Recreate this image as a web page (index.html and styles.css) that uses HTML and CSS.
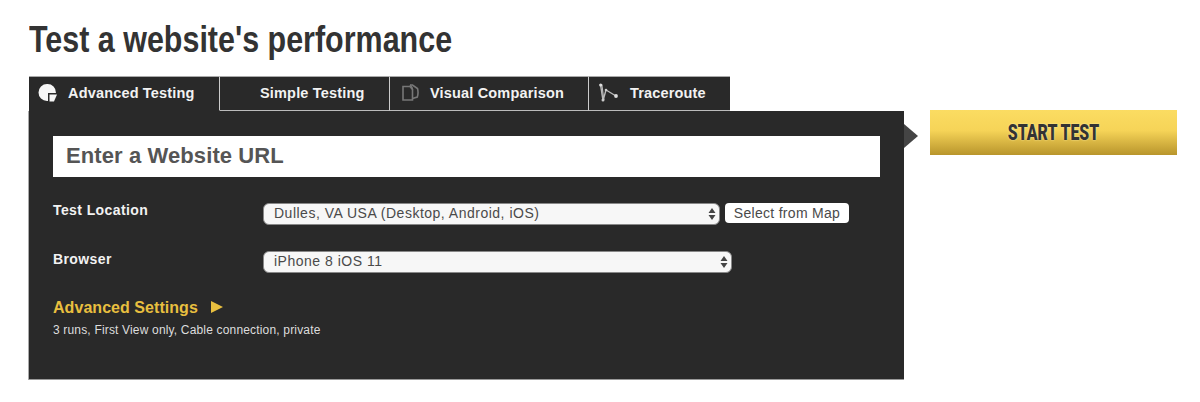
FILE: index.html
```html
<!DOCTYPE html>
<html lang="en">
<head>
    <meta charset="UTF-8">
    <meta name="viewport" content="width=device-width, initial-scale=1.0">
    <title>Test a website's performance</title>
    <link rel="stylesheet" href="styles.css">
</head>
<body>
    <h1 class="title">Test a website's performance</h1>
    <div class="tabs">
        <a class="tab tab-advanced active">
            <svg class="tab-icon" width="20" height="20" viewBox="0 0 20 20">
                <path d="M9 1a8.500 8.500 0 1 0 0 17l1-.1V10h8A8.500 8.500 0 0 0 9 1z" fill="#f6f6f6"/>
                <path d="M11.500 11.500H19L16 18.500H11.500z" fill="#f6f6f6"/>
            </svg>
            Advanced Testing
        </a>
        <a class="tab tab-simple">Simple Testing</a>
        <a class="tab tab-visual">
            <svg class="tab-icon" width="17" height="18" viewBox="0 0 17 18" fill="none" stroke="#777" stroke-width="1.600">
                <path d="M1 2.500h7l2.500 3v10.500H1z"/>
                <path d="M8 1h2.500l5 3.500c.8 3 .8 5.500-.2 8.500l-4.800 1.500"/>
                <path d="M8 1c1.800 1.500 2.500 3 2.500 4.500"/>
            </svg>
            Visual Comparison
        </a>
        <a class="tab tab-trace">
            <svg class="tab-icon" width="20" height="19" viewBox="0 0 20 19" fill="none" stroke="#bbb" stroke-width="1.400">
                <path d="M1.500 1.500L4 17.500 7 7l10 6"/>
                <path d="M2.800 1.500L4.800 17" stroke-width="1.200"/>
                <circle cx="1.700" cy="2" r="1.600" fill="#ddd" stroke="none"/>
                <circle cx="4" cy="17" r="1.500" fill="#ccc" stroke="none"/>
                <circle cx="7" cy="7" r="1.300" fill="#ccc" stroke="none"/>
                <circle cx="17" cy="13" r="1.900" fill="#ddd" stroke="none"/>
            </svg>
            Traceroute
        </a>
    </div>
    <div class="main">
        <form class="panel">
            <input class="url" type="text" placeholder="Enter a Website URL">
            <div class="row row-location">
                <label class="row-label">Test Location</label>
                <div class="select-wrap select-location">
                    <select><option>Dulles, VA USA (Desktop, Android, iOS)</option></select>
                    <svg class="updown" width="8" height="14" viewBox="0 0 8 14"><path d="M4 1l3.500 5H.5zM4 13L.5 8h7z" fill="#444"/></svg>
                </div>
                <button class="map-btn" type="button">Select from Map</button>
            </div>
            <div class="row row-browser">
                <label class="row-label">Browser</label>
                <div class="select-wrap select-browser">
                    <select><option>iPhone 8 iOS 11</option></select>
                    <svg class="updown" width="8" height="14" viewBox="0 0 8 14"><path d="M4 1l3.500 5H.5zM4 13L.5 8h7z" fill="#444"/></svg>
                </div>
            </div>
            <div class="advanced">Advanced Settings <span class="advanced-arrow"></span></div>
            <div class="summary">3 runs, First View only, Cable connection, private</div>
        </form>
        <div class="start-arrow"></div>
        <button class="start" type="button"><span>START TEST</span></button>
    </div>
</body>
</html>
```

FILE: styles.css
```css
body {
    margin: 0;
    padding: 0 0 0 29px;
    font-family: "Liberation Sans", Arial, sans-serif;
    background-color: #fff;
    color: #292929;
}
.title {
    margin: 0;
    height: 76px;
    box-sizing: border-box;
    padding-top: 19px;
    font-size: 36px;
    line-height: 41px;
    font-weight: bold;
    color: #333;
    transform: scaleX(0.846);
    transform-origin: left;
}
.tabs {
    display: flex;
    height: 35px;
}
.tab {
    display: flex;
    align-items: center;
    box-sizing: border-box;
    height: 35px;
    padding-bottom: 2px;
    background: #292929;
    color: #f2f2f2;
    font-size: 14.500px;
    font-weight: bold;
    letter-spacing: 0.17px;
    border-top: 1px solid #aaa;
    border-bottom: 1px solid #bbb;
    border-right: 1px solid #ccc;
}
.tab.active {
    border-bottom-color: #292929;
}
.tab-advanced {
    width: 191px;
    padding-left: 9px;
}
.tab-simple {
    width: 170px;
    padding-left: 40px;
}
.tab-visual {
    width: 199px;
    padding-left: 12px;
}
.tab-trace {
    width: 141px;
    padding-left: 10px;
    border-right: none;
}
.tab-icon {
    margin-right: 10px;
}
.tab-visual .tab-icon,
.tab-trace .tab-icon {
    margin-right: 11px;
}
.main {
    display: flex;
    align-items: flex-start;
}
.panel {
    box-sizing: border-box;
    width: 875px;
    height: 269px;
    padding: 25px 24px 0;
    background: #292929;
    border-bottom: 1px solid #999;
    box-shadow: -1px 0 0 #aaa;
}
.url {
    display: block;
    box-sizing: border-box;
    width: 827px;
    height: 41px;
    padding: 0 13px 2px;
    border: none;
    background: #fff;
    font-family: inherit;
    font-size: 22px;
    font-weight: bold;
    letter-spacing: 0.1px;
}
.url::placeholder {
    color: #555;
    opacity: 1;
}
.row {
    display: flex;
    align-items: flex-start;
}
.row-location {
    margin-top: 26px;
}
.row-browser {
    margin-top: 26px;
}
.row-label {
    width: 210px;
    flex: none;
    color: #f2f2f2;
    font-size: 14px;
    line-height: 16px;
    font-weight: bold;
    letter-spacing: 0.4px;
}
.row-location .row-label {
    margin-top: -1px;
}
.select-wrap {
    position: relative;
    height: 22px;
}
.select-location {
    width: 457px;
}
.select-browser {
    width: 469px;
}
.select-wrap select {
    display: block;
    width: 100%;
    height: 100%;
    padding: 0 10px 2px;
    border: 1px solid #888;
    border-radius: 6px;
    background: #f7f7f7;
    color: #4a4a4a;
    font-family: inherit;
    font-size: 14px;
    letter-spacing: 0.5px;
    appearance: none;
}
.updown {
    position: absolute;
    right: 4px;
    top: 4px;
}
.map-btn {
    box-sizing: border-box;
    width: 124px;
    height: 20px;
    margin-left: 5px;
    padding: 0;
    border: none;
    border-radius: 4px;
    background: #fff;
    color: #4a4a4a;
    font-family: inherit;
    font-size: 14px;
    letter-spacing: 0.3px;
}
.advanced {
    margin-top: 26px;
    color: #e8bf3f;
    font-size: 16px;
    line-height: 18px;
    font-weight: bold;
    letter-spacing: 0.05px;
}
.advanced-arrow {
    display: inline-block;
    width: 0;
    height: 0;
    margin-left: 9px;
    border-left: 12px solid #e8bf3f;
    border-top: 6.500px solid transparent;
    border-bottom: 6.500px solid transparent;
}
.summary {
    margin-top: 5px;
    color: #ddd;
    font-size: 12px;
    line-height: 16px;
    letter-spacing: 0.17px;
}
.start-arrow {
    width: 0;
    height: 0;
    margin-top: 13px;
    border-left: 14px solid #444;
    border-top: 12px solid transparent;
    border-bottom: 12px solid transparent;
}
.start {
    box-sizing: border-box;
    width: 247px;
    height: 45px;
    margin-top: -1px;
    margin-left: 12px;
    padding: 0;
    border: none;
    background: linear-gradient(#fbdc62 0%, #f6d458 45%, #b8952c 100%);
    color: #333;
    font-family: Roboto, sans-serif;
    font-size: 22px;
    font-weight: 900;
    text-shadow: 0 0 2px #fff3b8;
}
.start span {
    display: inline-block;
    transform: scaleX(0.72);
}
```
